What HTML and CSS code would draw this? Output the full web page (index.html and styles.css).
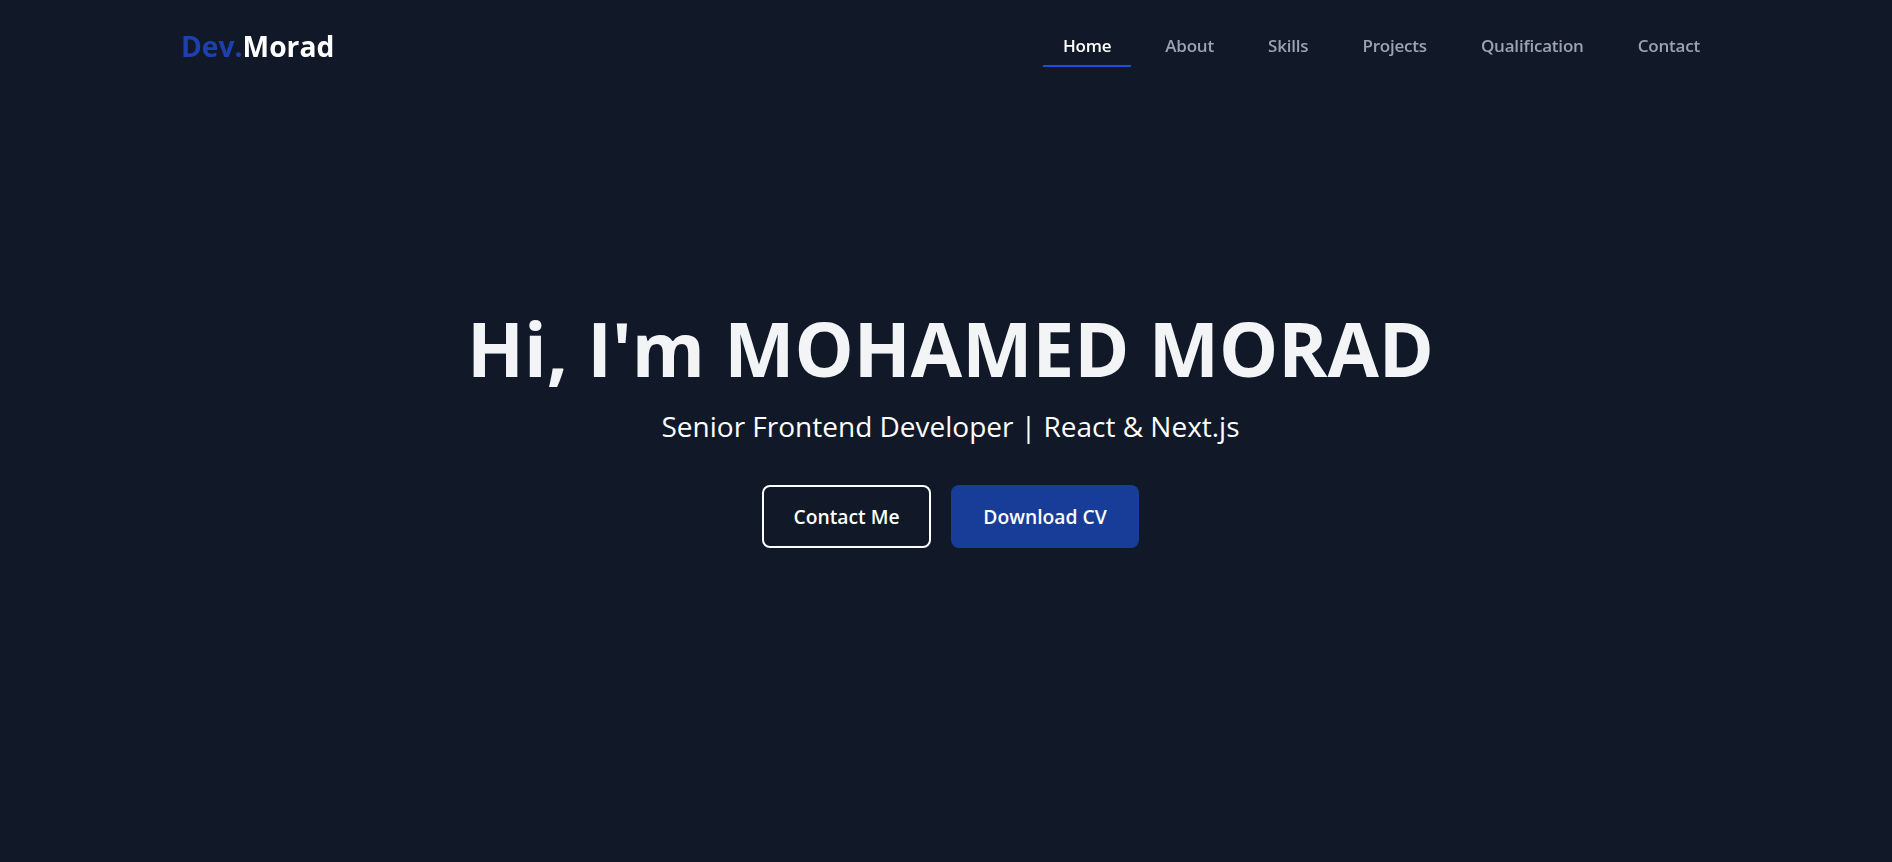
FILE: index.html
```html
<!DOCTYPE html>
<html lang="en">
<head>
<meta charset="utf-8">
<title>Dev.Morad</title>
<link rel="stylesheet" href="styles.css">
</head>
<body>
<header class="site-header">
  <div class="header-inner">
    <a class="logo" href="#"><span class="logo-accent">Dev.</span>Morad</a>
    <nav class="nav">
      <a class="nav-link active" href="#">Home</a>
      <a class="nav-link" href="#">About</a>
      <a class="nav-link" href="#">Skills</a>
      <a class="nav-link" href="#">Projects</a>
      <a class="nav-link" href="#">Qualification</a>
      <a class="nav-link" href="#">Contact</a>
    </nav>
  </div>
</header>
<main>
  <section class="hero">
    <h1 class="hero-title">Hi, I'm MOHAMED MORAD</h1>
    <p class="hero-subtitle">Senior Frontend Developer | React &amp; Next.js</p>
    <div class="hero-actions">
      <a class="btn btn-outline" href="#">Contact Me</a>
      <a class="btn btn-primary" href="#">Download CV</a>
    </div>
  </section>
</main>
</body>
</html>
```
FILE: styles.css
```css
* { box-sizing: border-box; }
html, body { margin: 0; padding: 0; }
body {
  background: #111827;
  color: #f3f4f6;
  font-family: "Open Sans", "Noto Sans", sans-serif;
}
a { text-decoration: none; color: inherit; }

.site-header {
  position: fixed;
  top: 0;
  left: 0;
  right: 0;
  z-index: 10;
}
.header-inner {
  height: 92px;
  padding: 0 172px 0 181px;
  display: flex;
  align-items: center;
  justify-content: space-between;
}
.logo {
  font-size: 28.2px;
  font-weight: 700;
  color: #ffffff;
}
.logo-accent { color: #1e40af; }

.nav {
  display: flex;
  align-items: center;
  gap: 14px;
}
.nav-link {
  font-size: 17px;
  font-weight: 600;
  color: #9ca3af;
  padding: 8px 20px;
  border-bottom: 2px solid transparent;
  letter-spacing: -0.2px;
}
.nav-link.active {
  color: #ffffff;
  border-bottom-color: #1d4ed8;
}

.hero {
  min-height: 100vh;
  display: flex;
  flex-direction: column;
  align-items: center;
  justify-content: center;
  text-align: center;
  padding: 0 0 6px 9px;
}
.hero-title {
  margin: 0;
  font-size: 74.5px;
  font-weight: 700;
  line-height: 1.1;
  color: #f3f4f6;
}
.hero-subtitle {
  margin: 17px 0 0;
  font-size: 28px;
  font-weight: 400;
  color: #ffffff;
}
.hero-actions {
  display: flex;
  gap: 20px;
  margin-top: 40px;
}
.btn {
  display: inline-flex;
  align-items: center;
  justify-content: center;
  height: 63px;
  padding-top: 1px;
  border-radius: 8px;
  font-size: 19.3px;
  font-weight: 600;
  color: #ffffff;
}
.btn-outline {
  width: 169px;
  border: 2px solid #ffffff;
}
.btn-primary {
  width: 188px;
  background: #183d98;
}
```
